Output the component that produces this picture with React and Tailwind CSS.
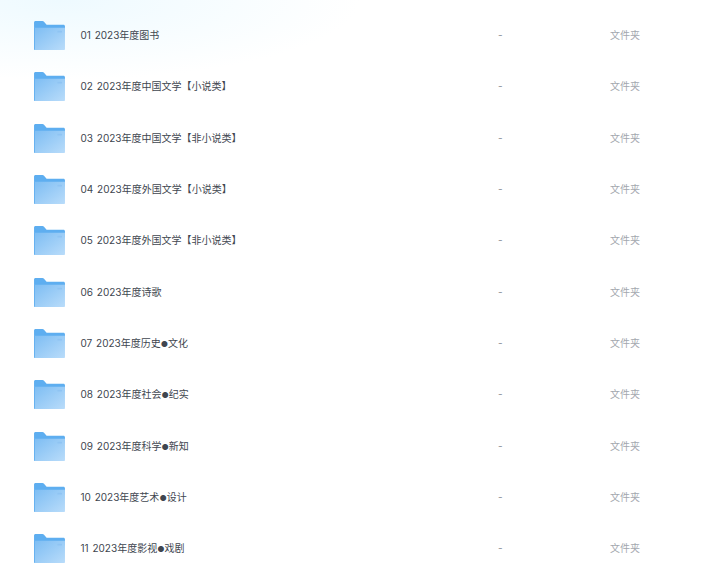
import React from "react";

const folders = [
  ["01 2023年度图书"],
  ["02 2023年度中国文学【小说类】"],
  ["03 2023年度中国文学【非小说类】"],
  ["04 2023年度外国文学【小说类】"],
  ["05 2023年度外国文学【非小说类】"],
  ["06 2023年度诗歌"],
  ["07 2023年度历史", "文化"],
  ["08 2023年度社会", "纪实"],
  ["09 2023年度科学", "新知"],
  ["10 2023年度艺术", "设计"],
  ["11 2023年度影视", "戏剧"],
];

function FolderIcon() {
  return (
    <svg width="31" height="29" viewBox="0 0 32 30" className="shrink-0">
      <defs>
        <linearGradient id="folderFront" x1="0" y1="0" x2="1" y2="1">
          <stop offset="0" stopColor="#7dbdf3" />
          <stop offset="1" stopColor="#b9dcfa" />
        </linearGradient>
      </defs>
      <path d="M0 1.5C0 .7.7 0 1.5 0h7.2c.6 0 1 .2 1.4.6L13 4h17.5c.8 0 1.5.7 1.5 1.5V12H0z" fill="#5eaef0" />
      <path d="M0 7h32v22c0 .6-.4 1-1 1H1c-.6 0-1-.4-1-1z" fill="url(#folderFront)" />
      <path d="M0 7h1v23H1c-.6 0-1-.4-1-1z" fill="#66b1f0" />
      <rect x="24" y="10" width="5" height="2" rx="1" fill="#8fc4f3" />
    </svg>
  );
}

export default function App() {
  return (
    <div className="h-[566px] w-[720px] overflow-hidden bg-[radial-gradient(ellipse_300px_80px_at_60px_0px,#eefaff,#ffffff)] pt-[10px] font-['Inter','Noto_Sans_CJK_SC',sans-serif] text-[10px]">
      {folders.map(([name, rest]) => (
        <div key={name} className="flex h-[51.3px] items-center">
          <div className="ml-[34px] flex w-[46.5px] items-center">
            <FolderIcon />
          </div>
          <div className="w-[417.5px] text-[#40464f] [word-spacing:1px]">
            {name}
            {rest && <span className="text-[8px]">●</span>}
            {rest}
          </div>
          <div className="w-[112px] text-[#8a8f98]">-</div>
          <div className="text-[#a3a7ae]">文件夹</div>
        </div>
      ))}
    </div>
  );
}
